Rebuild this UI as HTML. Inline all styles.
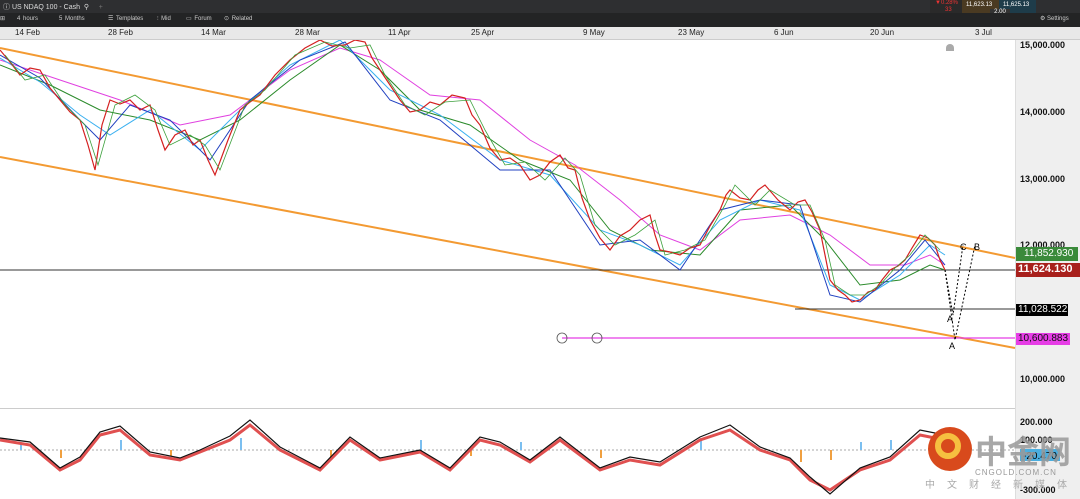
<!DOCTYPE html>
<html><head><meta charset="utf-8"><style>
*{margin:0;padding:0;box-sizing:border-box}
body{width:1080px;height:499px;overflow:hidden;background:#fff;font-family:"Liberation Sans",sans-serif;position:relative}
.a{position:absolute}
</style></head><body>
<div class="a" style="left:0;top:0;width:1080px;height:13px;background:#2e2f31"></div>
<div class="a" style="left:3px;top:2px;font-size:7px;color:#ddd;white-space:nowrap">ⓘ US NDAQ 100 - Cash &nbsp;⚲ &nbsp;&nbsp;&nbsp;&nbsp;<span style="color:#777">+</span></div>
<div class="a" style="left:930px;top:0;width:32px;height:13px;background:#2a2a2a"></div>
<div class="a" style="left:935px;top:0;font-size:6px;color:#e33;line-height:7px">▼0.28%<br>&nbsp;&nbsp;&nbsp;&nbsp;&nbsp;&nbsp;33</div>
<div class="a" style="left:962px;top:0;width:37px;height:13px;background:#4a3a22;color:#fff;font-size:6px;padding:2px 4px">11,623.13</div>
<div class="a" style="left:999px;top:0;width:37px;height:13px;background:#1e3c4a;color:#fff;font-size:6px;padding:2px 4px">11,625.13</div>
<div class="a" style="left:990px;top:9px;width:20px;height:7px;background:#333;color:#fff;font-size:6px;text-align:center;line-height:7px">2.00</div>
<div class="a" style="left:0;top:13px;width:1080px;height:14px;background:#232425"></div>
<div class="a" style="left:0;top:15px;font-size:6px;color:#ccc;white-space:nowrap;word-spacing:1px">
<span style="display:inline-block;width:14px">⊞</span><span style="display:inline-block;width:42px;padding-left:3px">4 hours</span><span style="display:inline-block;width:46px;padding-left:3px">5 Months</span><span style="display:inline-block;width:50px;padding-left:6px">☰ Templates</span><span style="display:inline-block;width:30px;padding-left:5px">⫶ Mid</span><span style="display:inline-block;width:38px;padding-left:4px">▭ Forum</span><span style="display:inline-block;width:40px;padding-left:4px">⊙ Related</span></div>
<div class="a" style="left:1040px;top:15px;font-size:6px;color:#ccc">⚙ Settings</div>
<div class="a" style="left:0;top:27px;width:1080px;height:13px;background:#e8e8e8;border-bottom:1px solid #ccc"></div>
<div class="a" style="left:0;top:28px;width:1015px;height:12px;font-size:8px;color:#222">
<span class="a" style="left:15px">14 Feb</span><span class="a" style="left:108px">28 Feb</span><span class="a" style="left:201px">14 Mar</span><span class="a" style="left:295px">28 Mar</span><span class="a" style="left:388px">11 Apr</span><span class="a" style="left:471px">25 Apr</span><span class="a" style="left:583px">9 May</span><span class="a" style="left:678px">23 May</span><span class="a" style="left:774px">6 Jun</span><span class="a" style="left:870px">20 Jun</span><span class="a" style="left:975px">3 Jul</span></div>
<div class="a" style="left:1015px;top:40px;width:65px;height:459px;background:#efefef;border-left:1px solid #ddd"></div>
<div class="a" style="left:0;top:408px;width:1015px;height:1px;background:#ccc"></div>
<div class="a" style="left:1020px;top:40px;font-size:9px;font-weight:bold;color:#111;line-height:10px">
<div class="a" style="top:0">15,000.000</div><div class="a" style="top:67px">14,000.000</div><div class="a" style="top:134px">13,000.000</div><div class="a" style="top:200px">12,000.000</div><div class="a" style="top:334px">10,000.000</div>
<div class="a" style="top:377px">200.000</div><div class="a" style="top:395px">100.000</div><div class="a" style="top:445px">-300.000</div></div>
<svg class="a" style="left:0;top:40px" width="1080" height="459">
<line x1="0" y1="8" x2="1015" y2="218" stroke="#f39a32" stroke-width="2"/>
<line x1="0" y1="117" x2="1015" y2="308" stroke="#f39a32" stroke-width="2"/>
<line x1="0" y1="230" x2="1015" y2="230" stroke="#333" stroke-width="1"/>
<line x1="795" y1="269" x2="1015" y2="269" stroke="#333" stroke-width="1"/>
<line x1="562" y1="298" x2="1015" y2="298" stroke="#e53ee5" stroke-width="1.2"/>
<circle cx="562" cy="298" r="5" fill="none" stroke="#555" stroke-width=".8"/><circle cx="597" cy="298" r="5" fill="none" stroke="#555" stroke-width=".8"/>
<polyline fill="none" stroke="#e040e0" stroke-width="1" points="0,20 60,40 120,60 180,85 230,75 290,30 340,8 380,20 430,55 480,60 530,100 575,125 620,160 660,195 700,210 740,180 790,175 830,195 870,225 905,225 930,215 945,225"/>
<polyline fill="none" stroke="#2a8a2a" stroke-width="1" points="0,25 50,45 100,70 150,80 200,100 240,80 290,40 340,5 380,30 420,70 470,85 520,120 570,140 610,190 650,210 700,215 740,170 790,165 825,200 860,245 900,240 930,225 945,230"/>
<polyline fill="none" stroke="#3ab0f0" stroke-width="1" points="0,18 40,42 80,75 110,95 150,70 200,110 240,70 290,25 340,0 390,50 440,75 500,120 550,135 600,190 640,205 680,225 720,180 760,160 800,170 830,245 860,260 900,235 930,205 945,215"/>
<polyline fill="none" stroke="#2040c0" stroke-width="1" points="0,15 40,38 80,80 100,100 130,65 170,80 210,120 250,60 300,20 345,2 390,60 440,80 500,130 550,130 600,205 640,200 680,230 720,170 760,160 800,165 830,255 860,262 900,230 925,200 945,225"/>
<polyline fill="none" stroke="#d42020" stroke-width="1.2" points="0,10 10,22 20,35 30,28 40,30 50,48 60,60 70,72 80,80 88,105 95,130 102,85 110,60 120,64 130,60 140,70 150,65 158,90 165,110 175,95 185,90 193,105 200,100 208,120 215,135 228,100 240,70 250,62 260,55 275,35 290,20 305,8 320,0 332,6 345,5 355,0 365,2 372,18 380,30 390,45 400,60 410,72 420,70 430,62 440,65 452,55 465,58 472,75 480,85 490,108 500,120 510,118 520,125 530,140 540,135 550,122 560,115 568,128 575,130 582,158 590,180 600,198 610,210 620,196 630,190 640,180 650,175 655,195 660,210 670,212 680,215 690,208 700,205 710,186 720,170 726,155 730,150 740,158 750,160 758,150 765,145 778,160 790,170 798,162 805,160 812,172 820,190 825,215 830,240 838,250 845,255 852,262 860,260 868,252 875,250 882,240 890,230 898,226 905,220 912,208 920,195 928,198 935,205 940,220 945,230"/>
<polyline fill="none" stroke="#3ca03c" stroke-width=".8" points="5,15 25,40 45,35 65,65 85,85 98,125 115,65 135,55 155,70 170,105 190,95 205,105 220,130 245,65 265,50 295,15 325,2 350,8 370,5 385,35 405,65 425,75 445,62 470,60 485,90 505,125 525,122 545,140 565,118 580,135 595,185 615,205 635,195 655,180 665,215 685,210 705,200 725,165 735,145 755,165 770,150 795,165 810,165 825,200 835,245 850,255 865,255 880,245 895,228 910,215 925,195 940,210"/>
<g stroke="#000" stroke-dasharray="2,2" fill="none" stroke-width="1"><polyline points="945,230 953,275 963,205"/><polyline points="945,230 955,300 975,205"/></g>
<g font-size="9" fill="#000"><text x="947" y="282">A</text><text x="949" y="309">A</text><text x="960" y="210">C</text><text x="974" y="210">B</text></g>
<path d="M946 8 a4 4 0 0 1 8 0 v3 h-8z" fill="#aaa"/>
<line x1="0" y1="410" x2="1015" y2="410" stroke="#aaa" stroke-dasharray="2,2"/>
<g fill="#7bbff0"><rect x="20" y="403" width="2" height="7"/><rect x="120" y="400" width="2" height="10"/><rect x="240" y="398" width="2" height="12"/><rect x="420" y="400" width="2" height="10"/><rect x="520" y="402" width="2" height="8"/><rect x="700" y="398" width="2" height="12"/><rect x="890" y="400" width="2" height="10"/><rect x="860" y="402" width="2" height="8"/></g>
<g fill="#f0a040"><rect x="60" y="410" width="2" height="8"/><rect x="170" y="410" width="2" height="6"/><rect x="330" y="410" width="2" height="10"/><rect x="470" y="410" width="2" height="6"/><rect x="600" y="410" width="2" height="8"/><rect x="800" y="410" width="2" height="12"/><rect x="830" y="410" width="2" height="10"/></g>
<polyline fill="none" stroke="#e05050" stroke-width="3" points="0,400 30,405 60,430 80,420 100,395 120,390 150,415 180,420 200,412 230,400 250,385 280,410 320,430 350,400 380,420 420,412 450,430 480,400 500,405 530,422 560,400 600,430 630,420 660,425 700,400 730,390 760,410 790,420 810,440 830,450 860,430 890,420 920,395 945,400"/>
<polyline fill="none" stroke="#111" stroke-width="1.2" points="0,398 30,402 60,428 80,417 100,392 120,386 150,412 180,418 200,410 230,396 250,380 280,407 320,428 350,397 380,418 420,410 450,428 480,397 500,402 530,420 560,397 600,428 630,417 660,422 700,397 730,385 760,407 790,418 810,437 830,454 860,428 890,417 920,390 945,395"/>
<rect x="1020" y="409" width="40" height="12" fill="#4aaee0"/>
<text x="1023" y="419" font-size="10" fill="#000">-20.470</text>
<circle cx="950" cy="409" r="22" fill="#d84a1c"/><circle cx="948" cy="406" r="10" fill="none" stroke="#f6c040" stroke-width="6"/>
<text x="975" y="423" font-size="32" font-weight="bold" fill="#999" opacity=".85" font-family="Noto Sans CJK SC">中金网</text>
<text x="975" y="435" font-size="8" fill="#999" letter-spacing="1">CNGOLD.COM.CN</text>
<text x="925" y="448" font-size="10" fill="#aaa" letter-spacing="12" font-family="Noto Sans CJK SC">中文财经新媒体</text>
</svg>
<div class="a" style="left:1016px;top:247px;width:62px;height:14px;background:#3a8a3a;color:#fff;font-size:10px;padding:1px 0 0 8px">11,852.930</div>
<div class="a" style="left:1016px;top:263px;width:64px;height:14px;background:#a8201c;color:#fff;font-size:11px;font-weight:bold;padding:0 0 0 2px">11,624.130</div>
<div class="a" style="left:1016px;top:304px;width:52px;height:12px;background:#000;color:#fff;font-size:10px;padding:0 0 0 2px">11,028.522</div>
<div class="a" style="left:1016px;top:333px;width:54px;height:12px;background:#e63de6;color:#111;font-size:10px;padding:0 0 0 2px">10,600.883</div>
</body></html>
